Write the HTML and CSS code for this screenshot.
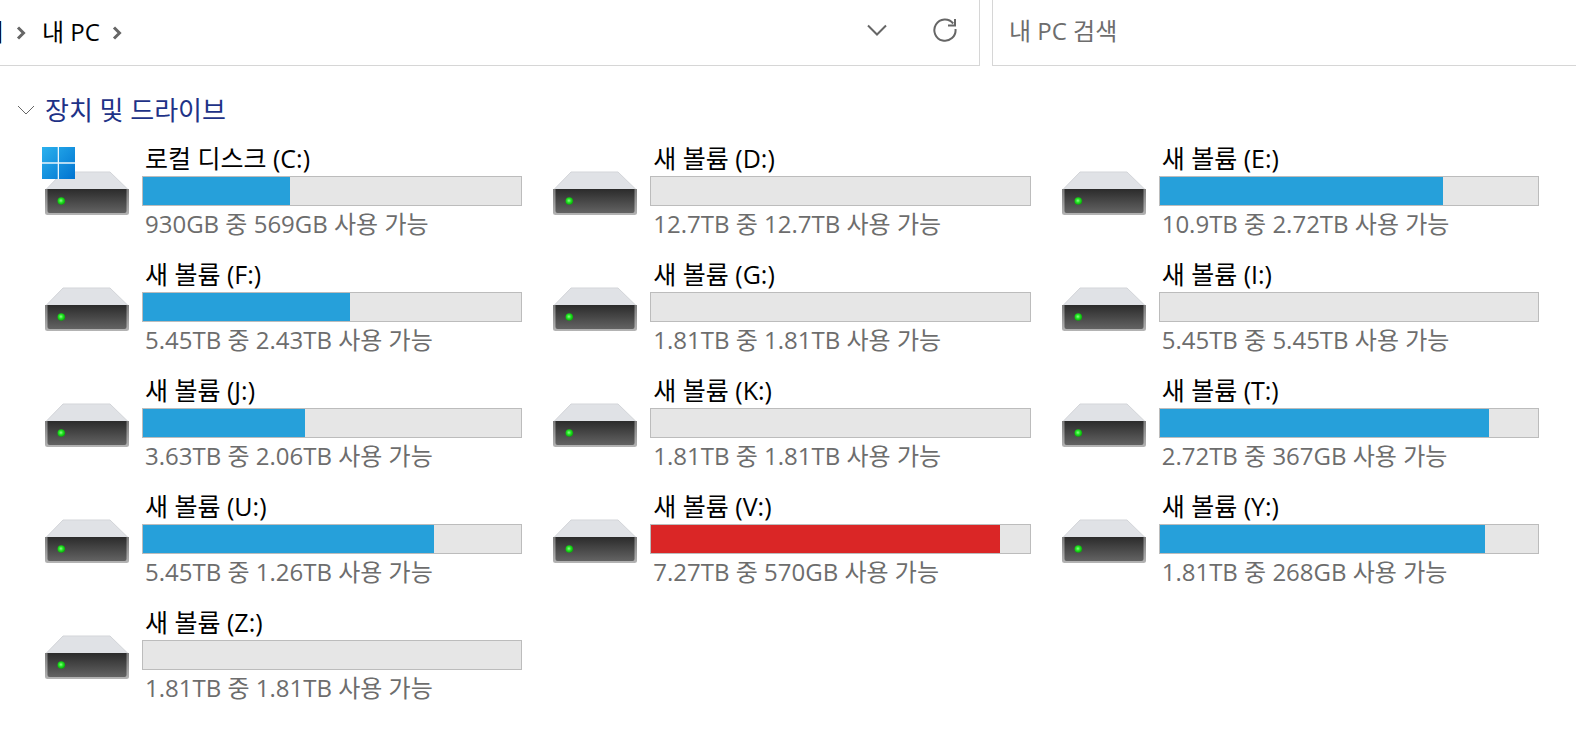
FILE: index.html
```html
<!DOCTYPE html>
<html lang="ko">
<head>
<meta charset="UTF-8"/>
<meta name="viewport" content="width=device-width, initial-scale=1.0"/>
<title>내 PC</title>
<link rel="stylesheet" href="styles.css">
</head>
<body>

<!-- SHARED ICONS -->
<svg class="sprites" width="0" height="0" aria-hidden="true">
  <defs>
    <linearGradient id="front" x1="0" y1="0" x2="0" y2="1">
      <stop offset="0" stop-color="#2b2b2b"/>
      <stop offset="1" stop-color="#636363"/>
    </linearGradient>
    <linearGradient id="edge" x1="0" y1="0" x2="0" y2="1">
      <stop offset="0" stop-color="#7d7d7d"/>
      <stop offset="1" stop-color="#b4b4b4"/>
    </linearGradient>
    <radialGradient id="led" cx="0.45" cy="0.45" r="0.55">
      <stop offset="0" stop-color="#8dff8a"/>
      <stop offset="0.5" stop-color="#22e322"/>
      <stop offset="1" stop-color="#0aa80a"/>
    </radialGradient>
    <linearGradient id="win" gradientUnits="userSpaceOnUse" x1="0" y1="0" x2="33" y2="33">
      <stop offset="0" stop-color="#2bb2ee"/>
      <stop offset="1" stop-color="#0073d0"/>
    </linearGradient>
    <symbol id="drive" viewBox="0 0 87 69">
      <path d="M21 26H68L86 43.5H4Z" fill="#e0e2e6" stroke="#d3d5d9" stroke-width="1"/>
      <path d="M3 43H87V66.500A2.500 2.500 0 0 1 84.500 69H5.500A2.500 2.500 0 0 1 3 66.500Z" fill="url(#edge)"/>
      <path d="M5.500 43H84.500V65A2 2 0 0 1 82.500 67H7.500A2 2 0 0 1 5.500 65Z" fill="url(#front)"/>
      <circle cx="19.300" cy="55" r="3.800" fill="url(#led)"/>
    </symbol>
    <symbol id="windows" viewBox="0 0 87 69">
      <path d="M0 1H33V33H0Z" fill="#e9f5fc"/>
      <path d="M0 1H15.700V16.300H0ZM17 1H33V16.300H17ZM0 17.700H15.700V33H0ZM17 17.700H33V33H17Z" fill="url(#win)"/>
    </symbol>
  </defs>
</svg>

<!-- ADDRESS BAR -->
<header class="toolbar">
  <nav class="address" aria-label="주소">
    <a class="crumb crumb-cut" href="#">이</a>
    <svg class="crumb-arrow" width="10" height="14" viewBox="0 0 10 14"><path d="M2 1.500L7.500 7L2 12.500"/></svg>
    <a class="crumb" href="#">내 PC</a>
    <svg class="crumb-arrow" width="10" height="14" viewBox="0 0 10 14"><path d="M2 1.500L7.500 7L2 12.500"/></svg>
    <div class="address-buttons">
      <button class="icon-btn" type="button" aria-label="이전 위치">
        <svg width="24" height="24" viewBox="0 0 24 24"><path d="M3 7.500L12 16.500L21 7.500"/></svg>
      </button>
      <button class="icon-btn" type="button" aria-label="새로 고침">
        <svg width="24" height="24" viewBox="0 0 24 24"><path d="M22.500 11A10.600 10.600 0 1 1 20.200 5.500M22 1V7.500H15"/></svg>
      </button>
    </div>
  </nav>
  <input class="search" type="search" placeholder="내 PC 검색" aria-label="내 PC 검색">
</header>

<!-- DRIVES -->
<main class="content">
  <h1 class="group-heading">
    <button class="group-toggle" type="button" aria-expanded="true">
      <svg width="18" height="12" viewBox="0 0 18 12"><path d="M1 2L9 10L17 2"/></svg>
      장치 및 드라이브
    </button>
  </h1>
  <ul class="drives">
    <li class="drive">
      <svg class="drive-icon"><use href="#drive"/><use href="#windows"/></svg>
      <div class="drive-info">
        <div class="drive-name">로컬 디스크 (C:)</div>
        <div class="bar"><div class="bar-fill" style="width:38.8%"></div></div>
        <div class="drive-space">930GB 중 569GB 사용 가능</div>
      </div>
    </li>
    <li class="drive">
      <svg class="drive-icon"><use href="#drive"/></svg>
      <div class="drive-info">
        <div class="drive-name">새 볼륨 (D:)</div>
        <div class="bar"></div>
        <div class="drive-space">12.7TB 중 12.7TB 사용 가능</div>
      </div>
    </li>
    <li class="drive">
      <svg class="drive-icon"><use href="#drive"/></svg>
      <div class="drive-info">
        <div class="drive-name">새 볼륨 (E:)</div>
        <div class="bar"><div class="bar-fill" style="width:75%"></div></div>
        <div class="drive-space">10.9TB 중 2.72TB 사용 가능</div>
      </div>
    </li>
    <li class="drive">
      <svg class="drive-icon"><use href="#drive"/></svg>
      <div class="drive-info">
        <div class="drive-name">새 볼륨 (F:)</div>
        <div class="bar"><div class="bar-fill" style="width:54.7%"></div></div>
        <div class="drive-space">5.45TB 중 2.43TB 사용 가능</div>
      </div>
    </li>
    <li class="drive">
      <svg class="drive-icon"><use href="#drive"/></svg>
      <div class="drive-info">
        <div class="drive-name">새 볼륨 (G:)</div>
        <div class="bar"></div>
        <div class="drive-space">1.81TB 중 1.81TB 사용 가능</div>
      </div>
    </li>
    <li class="drive">
      <svg class="drive-icon"><use href="#drive"/></svg>
      <div class="drive-info">
        <div class="drive-name">새 볼륨 (I:)</div>
        <div class="bar"></div>
        <div class="drive-space">5.45TB 중 5.45TB 사용 가능</div>
      </div>
    </li>
    <li class="drive">
      <svg class="drive-icon"><use href="#drive"/></svg>
      <div class="drive-info">
        <div class="drive-name">새 볼륨 (J:)</div>
        <div class="bar"><div class="bar-fill" style="width:42.8%"></div></div>
        <div class="drive-space">3.63TB 중 2.06TB 사용 가능</div>
      </div>
    </li>
    <li class="drive">
      <svg class="drive-icon"><use href="#drive"/></svg>
      <div class="drive-info">
        <div class="drive-name">새 볼륨 (K:)</div>
        <div class="bar"></div>
        <div class="drive-space">1.81TB 중 1.81TB 사용 가능</div>
      </div>
    </li>
    <li class="drive">
      <svg class="drive-icon"><use href="#drive"/></svg>
      <div class="drive-info">
        <div class="drive-name">새 볼륨 (T:)</div>
        <div class="bar"><div class="bar-fill" style="width:87%"></div></div>
        <div class="drive-space">2.72TB 중 367GB 사용 가능</div>
      </div>
    </li>
    <li class="drive">
      <svg class="drive-icon"><use href="#drive"/></svg>
      <div class="drive-info">
        <div class="drive-name">새 볼륨 (U:)</div>
        <div class="bar"><div class="bar-fill" style="width:77%"></div></div>
        <div class="drive-space">5.45TB 중 1.26TB 사용 가능</div>
      </div>
    </li>
    <li class="drive">
      <svg class="drive-icon"><use href="#drive"/></svg>
      <div class="drive-info">
        <div class="drive-name">새 볼륨 (V:)</div>
        <div class="bar"><div class="bar-fill bar-full" style="width:92.2%"></div></div>
        <div class="drive-space">7.27TB 중 570GB 사용 가능</div>
      </div>
    </li>
    <li class="drive">
      <svg class="drive-icon"><use href="#drive"/></svg>
      <div class="drive-info">
        <div class="drive-name">새 볼륨 (Y:)</div>
        <div class="bar"><div class="bar-fill" style="width:86%"></div></div>
        <div class="drive-space">1.81TB 중 268GB 사용 가능</div>
      </div>
    </li>
    <li class="drive">
      <svg class="drive-icon"><use href="#drive"/></svg>
      <div class="drive-info">
        <div class="drive-name">새 볼륨 (Z:)</div>
        <div class="bar"></div>
        <div class="drive-space">1.81TB 중 1.81TB 사용 가능</div>
      </div>
    </li>
  </ul>
</main>

</body>
</html>
```
FILE: styles.css
```css
/* GLOBAL STYLES */
:root {
  --line:#d6d6d6;
  --muted:#6d6d6d;
  --heading:#1e3287;
  --bar-bg:#e6e6e6;
  --bar-border:#bcbcbc;
  --bar-blue:#26a0da;
  --bar-red:#da2626;
}
* {box-sizing:border-box;}
body {
  margin:0; background:#fff; color:#000;
  font-family:"Open Sans", "Noto Sans CJK KR", sans-serif; font-size:24px; line-height:32px;
}
button, input {font:inherit; color:inherit;}
button {padding:0; border:none; background:none; cursor:pointer;}
svg {flex:none; fill:none;}
.sprites {display:block;}

/* ADDRESS BAR */
.toolbar {display:grid; grid-template-columns:980fr 584fr; gap:12px; height:66px;}
.address {
  display:flex; align-items:center; min-width:0; padding-bottom:2px;
  border:1px solid var(--line); border-width:0 1px 1px 0;
}
.crumb {color:#000; text-decoration:none; white-space:nowrap;}
.crumb-cut {display:flex; justify-content:flex-end; width:4px; overflow:hidden;}
.crumb-arrow {margin:2px 16px 0 12px; stroke:#666; stroke-width:3;}
.address-buttons {display:flex; gap:44px; margin-left:auto; padding:0 22px 4px 0;}
.icon-btn {display:flex;}
.icon-btn svg {stroke:#666; stroke-width:2;}
.search {
  min-width:0; padding:0 16px 4px; background:#fff; outline:none;
  border:1px solid var(--line); border-width:0 0 1px 1px; border-radius:0; appearance:none;
}
.search::placeholder {color:var(--muted); opacity:1;}

/* DRIVES */
.content {padding:28px 37px 16px 42px;}
.group-heading {margin:0 0 16px -25px; font-size:26px; font-weight:400; color:var(--heading);}
.group-toggle {display:flex; align-items:center; gap:10px;}
.group-toggle svg {stroke:#666; stroke-width:1;}
.drives {
  display:grid; grid-template-columns:repeat(3, 1fr); gap:16px 28px;
  margin:0; padding:0; list-style:none;
}
.drive {display:flex; gap:13px; min-width:0;}
.drive-icon {width:87px; height:69px; margin-top:4px;}
.drive-info {flex:1; min-width:0;}
.drive-name, .drive-space {padding-left:3px; white-space:nowrap;}
.drive-name {font-size:25px;}
.drive-space {color:var(--muted); line-height:36px;}
.bar {height:30px; margin-top:2px; background:var(--bar-bg); border:1px solid var(--bar-border);}
.bar-fill {height:100%; background:var(--bar-blue);}
.bar-full {background:var(--bar-red);}
```
